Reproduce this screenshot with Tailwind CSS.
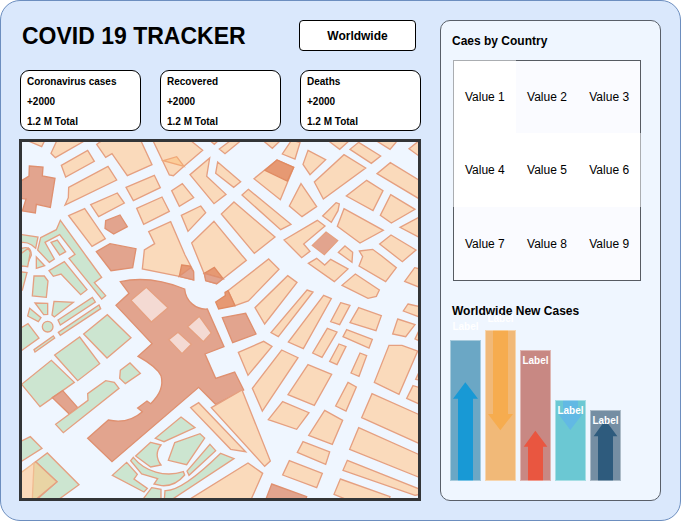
<!DOCTYPE html>
<html lang="en">
<head>
<meta charset="utf-8">
<meta name="viewport" content="width=device-width, initial-scale=1">
<title>COVID 19 Tracker</title>
<script src="https://cdn.jsdelivr.net/npm/@tailwindcss/browser@4"></script>
</head>
<body class="bg-white font-['Liberation_Sans',Arial,sans-serif] text-black">
<main class="flex items-stretch gap-[19px] rounded-[20px] border border-[#6c8ebf] bg-[#dae8fc] py-[19px] pr-[19px] pl-[18px]">
  <div class="min-w-0 flex-1">
    <header class="flex items-center justify-between pr-[5px] pl-[3px]">
      <h1 class="text-[23px] leading-7 font-bold">COVID 19 TRACKER</h1>
      <button type="button" class="h-[31px] w-[117px] rounded-[4px] border border-black bg-white text-xs font-bold">Worldwide</button>
    </header>

    <section class="mt-[19px] grid grid-cols-3 gap-[19px] pl-px text-[10px] leading-4 font-bold">
      <article class="flex flex-col gap-1 rounded-[9px] border border-black bg-white pt-[3px] pl-[6px]">
        <h2>Coronavirus cases</h2><p>+2000</p><p>1.2 M Total</p>
      </article>
      <article class="flex flex-col gap-1 rounded-[9px] border border-black bg-white pt-[3px] pl-[6px]">
        <h2>Recovered</h2><p>+2000</p><p>1.2 M Total</p>
      </article>
      <article class="flex flex-col gap-1 rounded-[9px] border border-black bg-white pt-[3px] pl-[6px]">
        <h2>Deaths</h2><p>+2000</p><p>1.2 M Total</p>
      </article>
    </section>

    <section aria-label="Map" class="mt-2 border-[3px] border-[#333537] bg-[#eff6ff]">
      <svg viewBox="66 426 1188 1068" class="block w-full" stroke-width="4" stroke="#e5a081" fill="#fadabb">
        <!-- north-west blocks -->
        <g transform="translate(45 405)">
          <path d="M40 18 80 35 90 15ZM125 18 108 55 121 68 208 18ZM139 91 218 46 238 79 152 126ZM161 157 279 94 305 135 150 210 160 188ZM245 28 272 67 291 56 337 122 411 89 378 18 262 16ZM333 157 418 121 436 158 355 197ZM365 220 441 186 463 229 386 268ZM161 242 209 221 271 311 231 334ZM227 209 307 174 328 204 251 245Z"/>
          <path d="M401 290 467 260 510 360 535 408 536 435 493 424 382 402 388 345 419 326Z"/>
          <g fill="#e2a48e" stroke="#df9070">
            <path d="M43 93 84 96 82 123 120 130 106 217 64 208 61 234 22 228 33 192 15 190V140L42 123ZM272 257 315 240 337 275 296 297 270 280ZM244 350 285 326 363 341 353 398 288 407Z"/>
          </g>
          <g fill="#cce5d0">
            <path d="M15 298 69 306 62 340 50 330Q35 320 15 323ZM15 342Q48 328 49 360L38 385Q28 396 15 394Z"/>
            <path d="M77 308 124 284 136 256 222 375 260 427 238 443 272 482 260 492 225 448 162 370 180 358 134 299 90 322 118 372 103 382 68 345Z"/>
            <path d="M108 322 127 315 152 350 134 360Z"/>
          </g>
        </g>
        <!-- north blocks -->
        <g transform="translate(450 405)">
          <path d="M8 15H120L158 46 102 94 70 122 58 120ZM179 69 170 124 228 178 192 206 120 119ZM203 81 272 140 251 157 197 115ZM97 146 131 188 88 214 65 167ZM152 213 167 233 114 289 94 241ZM252 201 375 306 313 355 214 237ZM295 163 423 268 392 284 276 180ZM192 259 275 360 289 376 219 431 200 446 169 437 162 415 125 324ZM178 15 193 28 207 15ZM208 42 244 15H275L225 56ZM337 15 367 40 393 15ZM312 131 381 75 431 97 391 194Z"/>
          <path d="M40 77 80 65 102 94Z" fill="#fbcc98" stroke="#f0a878"/>
          <path d="M345 106 381 75 431 97 412 138Z" fill="#e69973" stroke="#e08b62"/>
        </g>
        <!-- north-east blocks -->
        <g transform="translate(855 405)">
          <path d="M20 15 45 23 30 72-8 57ZM-3 315 97 256 120 273 56 327 75 349 50 368ZM69 46 122 74 75 119 54 88ZM127 15 164 43 195 15ZM221 22 287 63 259 85 195 43ZM177 59 242 99 115 192 88 141ZM270 15 315 43 333 22 330 15ZM372 41 405 15V65ZM316 83 405 137V193L276 116ZM245 136 294 167 264 227 184 183ZM48 146 95 215 51 245 13 213ZM317 179 390 223 319 264 286 241ZM153 203 163 207 159 227 139 262 113 243ZM177 221 295 286 225 324 157 274ZM345 277 405 245V308ZM318 300 393 345 352 380 284 327ZM180 333 203 352 201 382 160 352ZM223 348 263 343 290 363 334 398 302 440 222 393 233 365Z"/>
          <path d="M123 291 158 317 118 359 82 331Z" fill="#e2a48e"/>
        </g>
        <!-- western gardens -->
        <g transform="translate(45 765)">
          <g fill="#cce5d0">
            <path d="M15-2 40-20 46-8 38 35 15 32ZM15 50 36 53 22 105 15 110ZM57 63 88 63 99 78 94 127 52 123ZM64 6 89 32 64 40ZM102 47 148 20 216 104 197 119 138 57 115 64ZM60 144 98 145 98 178 86 179ZM117 139 175 142 118 186 111 180ZM44 160 78 188 70 200 38 183ZM129 195 232 127 241 141 136 210ZM130 232 252 150 257 161 136 241ZM57 284 115 243 119 249 60 291ZM15 220 39 206 72 249 15 290ZM206 237 277 179 348 248 276 309ZM119 300 194 246 254 326 188 377ZM20 388 109 316 178 382 75 455ZM316 346 345 324 376 355 331 386 314 370Z"/>
            <circle cx="98" cy="215" r="16"/>
          </g>
          <path fill="#e2a48e" stroke="#df9070" d="M316 80Q405 60 509 102C512 140 545 165 577 162L627 275 570 297 602 370 659 351 686 405 602 448 551 397 291 620 218 550 280 495Q340 508 382 470L368 459 396 438 407 446Q450 405 438 362 425 335 369 304L411 266 303 151 342 115Z"/>
          <path fill="#f4dad3" d="M348 136 394 97 459 158 409 201ZM553 184 589 234 565 260 518 215ZM461 254 489 232 529 268 501 296Z"/>
        </g>
        <!-- centre -->
        <g transform="translate(450 765)">
          <path d="M356 12 387 43 295 138 255 152 234 107ZM265 292 341 259 366 274 294 361ZM413 62 441 82 344 207 315 158Z"/>
          <path fill="#e69973" stroke="#e08b62" d="M95 30 121 33 124 40 88 64ZM163 55 193 37 219 71ZM197 141 226 122 225 112 234 107 255 152 206 162Z"/>
          <path fill="#e2a48e" stroke="#df9070" d="M88 64 122 38 131 50V75ZM163 55 219 71 200 86 167 77ZM217 188 287 175 318 237 248 263Z"/>
        </g>
        <!-- eastern blocks -->
        <g transform="translate(855 765)">
          <path d="M70 25 95 10 119 30 137 13 189 42 148 80ZM211 57 283 105 274 124 249 130 171 91ZM66 105 84 111-20 245-42 233ZM116 121 139 131 55 281 10 261ZM167 143 195 151 164 209 137 200ZM221 158 289 182 273 227 195 203ZM185 224 262 253 252 279 174 245ZM127 220 156 231 111 307 83 294ZM162 267 183 275 156 329 134 319ZM225 294 245 302 222 364 198 354ZM189 382 214 396 183 468 152 453ZM69 329 140 358 88 451 9 419ZM-10 285 39 308-68 468-98 400ZM-7 440 72 473 35 523-50 494ZM119 466 173 496 142 568 71 541ZM54 560 134 591 122 628 37 592ZM13 617 112 655 95 698-7 660ZM312 271H351L398 288 342 418 268 382ZM261 416 405 480V567L230 488ZM221 518 405 600V668L194 583ZM187 616 405 703V718L390 721 174 646ZM166 672 315 725 310 740H200L147 718ZM389 38 405 42V98L359 79ZM369 147 405 155V187L355 168ZM338 192 390 209 362 245 323 237ZM405 220 390 252 405 258ZM405 345 392 373 405 376ZM384 392 405 398V448L365 430Z"/>
          <path d="M-40 687 65 725 60 740H-60Z" fill="#e2a48e" stroke="#df9070"/>
        </g>
        <!-- southern gardens -->
        <g transform="translate(45 1125)">
          <path d="M527 98 551 83 692 230 647 223ZM589 98 681 45 766 258 749 274ZM525 372 699 264 743 295 708 374Z"/>
          <path fill="#e2a48e" stroke="#df9070" d="M112 68 143 47 188 98 163 117Z"/>
          <g fill="#cce5d0">
            <path d="M122 148 219 76 218 56 272 17 298 22 312 40 145 173ZM498 126 540 158 447 200 421 190ZM479 203 555 176 569 189 515 269 460 256ZM585 208 602 227 522 301 516 288ZM617 235 657 251 470 374H448L450 347Q500 350 617 235ZM407 202 438 210Q415 238 438 270L407 276 362 243ZM355 247C390 290 450 308 505 290L509 300Q480 335 440 332L417 327 428 311 380 297 347 257ZM335 262 367 298 357 312 397 340 387 351 292 301ZM410 338 438 343V374H383ZM15 200 46 185 81 220 15 262ZM62 260 97 234 192 329 130 374H65L126 320Z"/>
          </g>
          <path d="M62 260 126 320 62 374H52V268Z" fill="#e9d4a4"/>
          <path d="M15 295 57 264 52 374H15Z" stroke="#f0bb91"/>
        </g>
      </svg>
    </section>
  </div>

  <aside class="w-[221px] shrink-0 rounded-[10px] border border-[#595f69] bg-[#eff6ff] pt-3 pr-[19px] pb-[19px] pl-[9px]">
    <h2 class="pl-[2px] text-xs leading-4 font-bold">Caes by Country</h2>
    <div class="mt-[11px] pl-[3px]">
      <table class="w-full table-fixed border-separate border-spacing-0 text-center text-xs">
        <tbody>
          <tr class="h-[73px]">
            <td class="border-t border-l border-[#aaadb1] bg-white p-0">Value 1</td>
            <td class="border-t border-[#565b62] bg-[#fafbff] p-0">Value 2</td>
            <td class="border-t border-r border-[#565b62] bg-[#fafbff] p-0">Value 3</td>
          </tr>
          <tr class="h-[74px]">
            <td class="border-l border-[#aaadb1] bg-white p-0">Value 4</td>
            <td class="bg-white p-0">Value 5</td>
            <td class="border-r border-[#aaadb1] bg-white p-0">Value 6</td>
          </tr>
          <tr class="h-[74px]">
            <td class="border-b border-l border-[#565b62] bg-[#fafbff] p-0">Value 7</td>
            <td class="border-b border-[#565b62] bg-[#fafbff] p-0">Value 8</td>
            <td class="border-r border-b border-[#565b62] bg-[#fafbff] p-0">Value 9</td>
          </tr>
        </tbody>
      </table>
    </div>

    <h2 class="mt-[22px] pl-[2px] text-xs leading-4 font-bold">Worldwide New Cases</h2>
    <div class="mt-[11px] flex items-end gap-1 text-center text-[10px] leading-3 font-bold text-white">
      <div class="relative h-[141px] w-[31px] bg-[#6ba7c5]">
        <svg viewBox="0 0 93 423" class="block h-full w-full"><path fill="#1899d5" d="M46 127 84 176H69V423H24V176H9Z"/></svg>
        <span class="absolute inset-0 border border-white/40"></span>
        <span class="absolute inset-x-0 -top-[19px]">Label</span>
      </div>
      <div class="relative h-[151px] w-[31px] bg-[#f1b978]">
        <svg viewBox="0 0 93 453" class="block h-full w-full"><path fill="#f6ac4f" d="M24 0H69V252H84L46 301 9 252H24Z"/></svg>
        <span class="absolute inset-0 border border-white/40"></span>
        <span class="absolute inset-x-0 -top-[17px]">Label</span>
      </div>
      <div class="relative h-[131px] w-[31px] bg-[#c88883]">
        <svg viewBox="0 0 93 393" class="block h-full w-full"><path fill="#e95640" d="M46 242 82 290H69V393H24V290H11Z"/></svg>
        <span class="absolute inset-0 border border-white/40"></span>
        <span class="absolute inset-x-0 top-[5px]">Label</span>
      </div>
      <div class="relative h-[81px] w-[31px] bg-[#6bc8d3]">
        <svg viewBox="0 0 93 243" class="block h-full w-full"><path fill="#62b9e4" d="M24 0H69V43H82L46 90 11 43H24Z"/></svg>
        <span class="absolute inset-0 border border-white/40"></span>
        <span class="absolute inset-x-0 top-[5px]">Label</span>
      </div>
      <div class="relative h-[71px] w-[31px] bg-[#758ea3]">
        <svg viewBox="0 0 93 213" class="block h-full w-full"><path fill="#2e5b7d" d="M46 30 82 79H69V213H24V79H11Z"/></svg>
        <span class="absolute inset-0 border border-white/40"></span>
        <span class="absolute inset-x-0 top-[5px]">Label</span>
      </div>
    </div>
  </aside>
</main>
</body>
</html>
